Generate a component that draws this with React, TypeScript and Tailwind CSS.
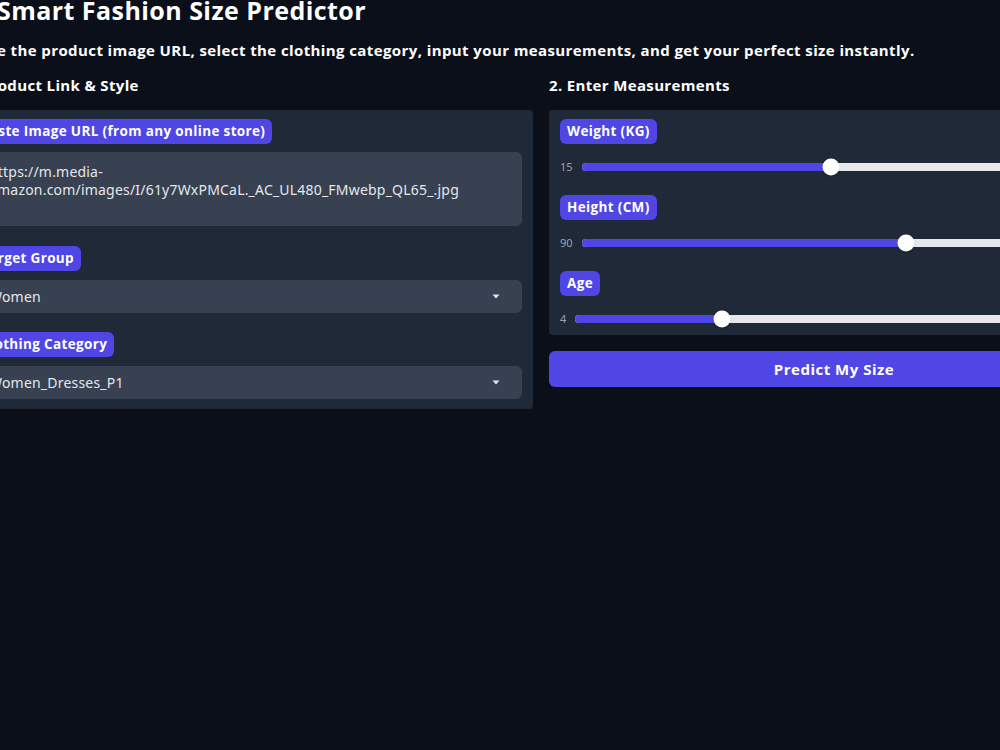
import React from 'react';

type SliderSpec = {
  label: string;
  min: number;
  max: number;
  value: number;
};

const sliders: SliderSpec[] = [
  { label: 'Weight (KG)', min: 15, max: 150, value: 79 },
  { label: 'Height (CM)', min: 90, max: 220, value: 170 },
  { label: 'Age', min: 4, max: 80, value: 25 },
];

const heading = { fontFamily: '"Open Sans", "Liberation Sans", sans-serif' };
const body = { fontFamily: '"Noto Sans", "Open Sans", sans-serif' };

function Chip({ children }: { children: React.ReactNode }) {
  return (
    <div
      className="flex h-[25px] w-fit items-center rounded-md bg-[#4f46e5] px-[7px] text-[13.5px] font-bold tracking-[0.35px] text-white"
      style={heading}
    >
      {children}
    </div>
  );
}

function Dropdown({ value }: { value: string }) {
  return (
    <div
      className="flex h-[33px] items-center justify-between rounded-md bg-[#374151] pl-[15px] pr-[22px] text-[14px] tracking-[0.2px] text-[#e5e7eb]"
      style={body}
    >
      <span>{value}</span>
      <svg width="8" height="5" viewBox="0 0 8 5">
        <path d="M0.5 0.5h7L4 4.5z" fill="#e5e7eb" />
      </svg>
    </div>
  );
}

function Slider({ label, min, max, value }: SliderSpec) {
  const pct = ((value - min) / (max - min)) * 100;
  return (
    <div className="flex flex-col">
      <Chip>{label}</Chip>
      <div className="mt-[11px] flex h-[24px] items-center gap-[9px]">
        <span className="text-[11px] text-[#9ca3af]" style={body}>
          {min}
        </span>
        <div className="relative h-[8px] flex-1 rounded-full bg-[#e5e7eb]">
          <div className="h-full rounded-full bg-[#4f46e5]" style={{ width: `${pct}%` }} />
          <div
            className="absolute top-1/2 h-[17px] w-[17px] -translate-x-1/2 -translate-y-1/2 rounded-full bg-white shadow"
            style={{ left: `${pct}%` }}
          />
        </div>
      </div>
    </div>
  );
}

export default function App() {
  return (
    <div className="h-[750px] w-[1000px] overflow-hidden bg-[#0b0f19]">
      <div className="ml-[-37px] w-[1156px]">
        <h1
          className="mt-[-7px] pl-[34px] text-[25px] font-bold leading-[34px] tracking-[0.45px] text-white"
          style={heading}
        >
          Smart Fashion Size Predictor
        </h1>
        <p
          className="mt-[13px] text-[15px] font-bold leading-[20px] tracking-[0.4px] text-white"
          style={heading}
        >
          Paste the product image URL, select the clothing category, input your measurements, and get your perfect size instantly.
        </p>

        <div className="mt-[15px] grid grid-cols-[570px_570px] gap-x-[16px]">
          {/* left column: link and style */}
          <div className="flex flex-col">
            <h2
              className="text-[15px] font-bold leading-[20px] tracking-[0.35px] text-white"
              style={heading}
            >
              1. Product Link &amp; Style
            </h2>
            <div className="mt-[15px] flex flex-col rounded-sm bg-[#1f2937] px-[11px] pt-[9px] pb-[10px]">
              <Chip>Paste Image URL (from any online store)</Chip>
              <div
                className="mt-[8px] h-[74px] rounded-md bg-[#374151] px-[15px] pt-[11px] text-[14px] leading-[18px] tracking-[0.2px] text-[#e5e7eb]"
                style={body}
              >
                https://m.media-
                <br />
                amazon.com/images/I/61y7WxPMCaL._AC_UL480_FMwebp_QL65_.jpg
              </div>
              <div className="mt-[20px]">
                <Chip>Target Group</Chip>
              </div>
              <div className="mt-[9px]">
                <Dropdown value="Women" />
              </div>
              <div className="mt-[19px]">
                <Chip>Clothing Category</Chip>
              </div>
              <div className="mt-[9px]">
                <Dropdown value="Women_Dresses_P1" />
              </div>
            </div>
          </div>

          {/* right column: measurements */}
          <div className="flex flex-col">
            <h2
              className="text-[15px] font-bold leading-[20px] tracking-[0.35px] text-white"
              style={heading}
            >
              2. Enter Measurements
            </h2>
            <div className="mt-[15px] flex flex-col gap-[16px] rounded-sm bg-[#1f2937] px-[11px] pt-[9px] pb-[4px]">
              {sliders.map((s) => (
                <Slider key={s.label} {...s} />
              ))}
            </div>
            <button
              className="mt-[16px] h-[36px] rounded-md bg-[#4f46e5] text-[15px] font-bold tracking-[0.5px] text-white"
              style={heading}
            >
              Predict My Size
            </button>
          </div>
        </div>
      </div>
    </div>
  );
}
